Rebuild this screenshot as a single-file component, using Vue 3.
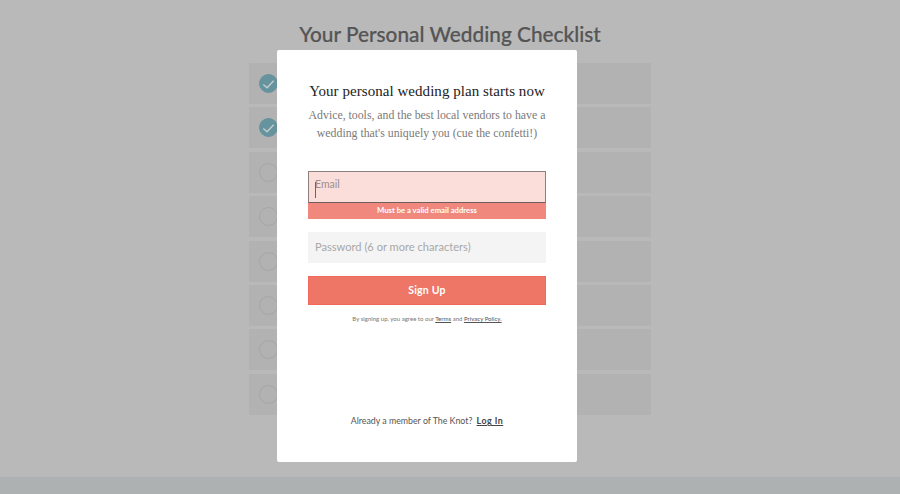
<template>
  <div class="page">
    <main class="checklist">
      <h1>Your Personal Wedding Checklist</h1>
      <ul class="rows">
        <li v-for="(done, i) in rows" :key="i" class="row">
          <span class="tick" :class="{ done }">
            <svg v-if="done" viewBox="0 0 18 18" width="18" height="18">
              <path d="M3.5 9.5 L7.5 13 L14.5 5.5" fill="none" stroke="#c4cccd" stroke-width="1.5" />
            </svg>
          </span>
        </li>
      </ul>
    </main>
    <footer class="foot"></footer>

    <div class="modal">
      <h2>Your personal wedding plan starts now</h2>
      <p class="lead">Advice, tools, and the best local vendors to have a wedding that's uniquely you (cue the confetti!)</p>

      <form class="form" @submit.prevent>
        <div class="field-error">
          <div class="input error">
            <span class="caret"></span>
            <span>Email</span>
          </div>
          <div class="error-msg">Must be a valid email address</div>
        </div>
        <div class="input">Password (6 or more characters)</div>
        <button class="submit" type="submit">Sign Up</button>
      </form>

      <p class="legal">By signing up, you agree to our <a href="#">Terms</a> and <a href="#">Privacy Policy.</a></p>

      <p class="member">Already a member of The Knot? <a href="#">Log In</a></p>
    </div>
  </div>
</template>

<script setup>
const rows = [true, true, false, false, false, false, false, false]
</script>

<style>
html, body {
  margin: 0;
  background: #b9b9b9;
}
</style>

<style scoped>
.page {
  position: relative;
  width: 900px;
  height: 494px;
  overflow: hidden;
  display: flex;
  flex-direction: column;
  background: #b9b9b9;
  font-family: Lato, "Noto Sans", sans-serif;
}

.checklist {
  flex: 1;
  display: flex;
  flex-direction: column;
  align-items: center;
  padding-top: 20px;
}

h1 {
  margin: 0 0 16px;
  height: 27px;
  line-height: 27px;
  font-size: 20.8px;
  font-weight: 500;
  -webkit-text-stroke: 0.2px #555;
  color: #555;
}

.rows {
  list-style: none;
  margin: 0;
  padding: 0;
  width: 402px;
  display: flex;
  flex-direction: column;
  gap: 3.4px;
}

.row {
  height: 41px;
  display: flex;
  align-items: center;
  padding-left: 10px;
  background: #b2b2b2;
}

.tick {
  width: 17px;
  height: 17px;
  border: 1px solid #a6a6a6;
  border-radius: 50%;
  display: flex;
  align-items: center;
  justify-content: center;
}

.tick.done {
  background: #65939e;
  border-color: #65939e;
}

.foot {
  height: 17px;
  background: #adb1b1;
}

.modal {
  position: absolute;
  left: 277px;
  top: 50px;
  width: 300px;
  height: 412px;
  box-sizing: border-box;
  padding: 31px 31px 0;
  background: #fff;
  border-radius: 2px;
  display: flex;
  flex-direction: column;
  align-items: center;
}

h2 {
  margin: 0;
  font-family: "Liberation Serif", serif;
  font-size: 15px;
  line-height: 20px;
  font-weight: 400;
  letter-spacing: 0.05px;
  color: #222;
  white-space: nowrap;
}

.lead {
  margin: 5px 0 0;
  font-family: "Liberation Serif", serif;
  font-size: 11.8px;
  line-height: 18px;
  text-align: center;
  color: #7a7a7a;
}

.form {
  width: 238px;
  margin-top: 29px;
  display: flex;
  flex-direction: column;
}

.field-error {
  margin-bottom: 13px;
}

.input {
  height: 31px;
  box-sizing: border-box;
  padding: 0 7px 2px;
  display: flex;
  align-items: center;
  background: #f4f4f4;
  font-size: 11.1px;
  color: #a8a8a8;
}

.input.error {
  position: relative;
  height: 32px;
  align-items: flex-start;
  padding: 6px 7px 0 6px;
  background: #fbdeda;
  border: 1px solid #8c7f7d;
  border-bottom-color: #6f5f5d;
  font-size: 10.5px;
  color: #9a8f8d;
}

.caret {
  position: absolute;
  left: 6px;
  top: 10px;
  width: 1px;
  height: 16px;
  background: #666;
}

.error-msg {
  height: 16px;
  line-height: 15px;
  background: #f0887d;
  color: #fff;
  font-size: 7.7px;
  font-weight: 700;
  text-align: center;
}

.submit {
  margin-top: 13px;
  height: 29px;
  padding: 0 0 1px;
  border: 1px solid #f2695c;
  background: #ed7667;
  color: #fff;
  font-family: inherit;
  font-size: 10.5px;
  font-weight: 700;
  letter-spacing: 0.2px;
}

.legal {
  margin: 9px 0 0;
  font-size: 6.05px;
  line-height: 10px;
  color: #777;
  white-space: nowrap;
}

.legal a {
  color: #555;
}

.member {
  margin: 90px 0 0;
  font-size: 8.8px;
  line-height: 14px;
  color: #555;
  white-space: nowrap;
}

.member a {
  margin-left: 2px;
  font-weight: 700;
  letter-spacing: 0.5px;
  color: #444;
}
</style>
